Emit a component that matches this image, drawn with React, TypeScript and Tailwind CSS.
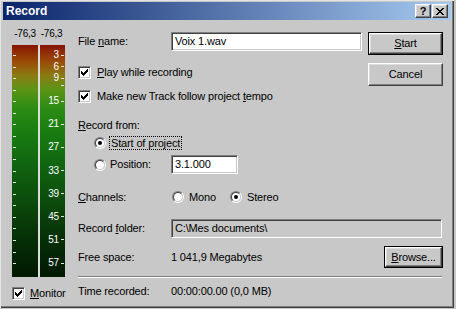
import React from 'react';

const sunken =
  'border border-t-[#808080] border-l-[#808080] border-b-white border-r-white shadow-[inset_1px_1px_0_#404040,inset_-1px_-1px_0_#c8c8c8]';
const raised =
  'border border-t-white border-l-white border-b-[#404040] border-r-[#404040] shadow-[inset_-1px_-1px_0_#808080,inset_1px_1px_0_#dcdcdc]';

const LEVELS = Array.from({ length: 19 }, (_, i) => (i + 1) * 3);
const LABELED = [3, 6, 9, 15, 21, 27, 33, 39, 45, 51, 57];

function Check({ checked = true }: { checked?: boolean }) {
  return (
    <span className={`flex h-[13px] w-[13px] shrink-0 items-center justify-center bg-white ${sunken}`}>
      {checked && (
        <svg width="7" height="7" viewBox="0 0 7 7" shapeRendering="crispEdges">
          <rect x="6" y="0" width="1" height="1" />
          <rect x="5" y="1" width="2" height="1" />
          <rect x="0" y="2" width="1" height="1" />
          <rect x="4" y="2" width="3" height="1" />
          <rect x="0" y="3" width="2" height="1" />
          <rect x="3" y="3" width="3" height="1" />
          <rect x="0" y="4" width="5" height="1" />
          <rect x="1" y="5" width="3" height="1" />
          <rect x="2" y="6" width="1" height="1" />
        </svg>
      )}
    </span>
  );
}

function Radio({ on = false }: { on?: boolean }) {
  return (
    <span className="flex h-[12px] w-[12px] shrink-0 rounded-full border border-t-[#808080] border-l-[#808080] border-b-white border-r-white">
      <span className="flex flex-1 items-center justify-center rounded-full border border-t-[#404040] border-l-[#404040] border-b-[#c8c8c8] border-r-[#c8c8c8] bg-white">
        {on && <span className="h-[4px] w-[4px] rounded-full bg-black" />}
      </span>
    </span>
  );
}

function Bar({ right = false }: { right?: boolean }) {
  return (
    <div className="relative h-full flex-1 bg-[linear-gradient(to_bottom,#861400_0%,#9a4a06_7%,#8c7a12_13%,#5e9416_19%,#2c8c14_27%,#187c10_38%,#106410_52%,#0b4a0b_68%,#062f06_84%,#021802_100%)]">
      {LEVELS.map((v, i) => {
        const top = 10 + i * 11.56;
        if (!right) {
          return <span key={v} className="absolute left-[1px] h-px w-[3px] bg-[#e4e4e4]" style={{ top }} />;
        }
        if (v > 12 && !LABELED.includes(v)) return null;
        return (
          <div
            key={v}
            className="absolute right-[1px] flex items-center gap-[2px] text-[10px] leading-[10px] text-white"
            style={{ top: top - 5 }}
          >
            {LABELED.includes(v) && <span>{v}</span>}
            <span className="h-px w-[3px] bg-[#e4e4e4]" />
          </div>
        );
      })}
    </div>
  );
}

function Btn({ children, primary = false, className = '' }: { children: React.ReactNode; primary?: boolean; className?: string }) {
  if (primary) {
    return (
      <div className={`flex border border-black ${className}`}>
        <div className={`flex flex-1 items-center justify-center bg-[#c8c8c8] ${raised}`}>{children}</div>
      </div>
    );
  }
  return <div className={`flex items-center justify-center bg-[#c8c8c8] ${raised} ${className}`}>{children}</div>;
}

export default function App() {
  return (
    <div className="h-[309px] w-[456px] bg-[#c8c8c8] font-['Liberation_Sans',Arial,sans-serif] text-[11px] tracking-[-0.15px] text-black">
      <div className="flex h-[308px] w-[454px] flex-col px-[3px] pt-[2px] shadow-[inset_1px_1px_0_#e4e4e4,inset_-1px_-1px_0_#404040,inset_-2px_-2px_0_#808080]">
        {/* title bar */}
        <div className="flex h-[18px] items-center justify-between bg-[linear-gradient(to_right,#0a246a,#a6caf0)] pl-[3px] pr-[3px]">
          <span className="text-[12px] font-bold tracking-normal text-white">Record</span>
          <div className="flex gap-[1px]">
            <div className={`flex h-[14px] w-[16px] items-center justify-center bg-[#c8c8c8] text-[11px] leading-none font-bold ${raised}`}>?</div>
            <div className={`flex h-[14px] w-[16px] items-center justify-center bg-[#c8c8c8] ${raised}`}>
              <svg width="8" height="7" viewBox="0 0 8 7" shapeRendering="crispEdges">
                <path d="M0 0h2v1h-2zM6 0h2v1h-2zM1 1h2v1h-2zM5 1h2v1h-2zM2 2h4v1h-4zM3 3h2v1h-2zM2 4h4v1h-4zM1 5h2v1h-2zM5 5h2v1h-2zM0 6h2v1h-2zM6 6h2v1h-2z" />
              </svg>
            </div>
          </div>
        </div>

        <div className="flex flex-1">
          {/* meters */}
          <div className="ml-[9px] flex w-[53px] flex-col pt-[8px]">
            <div className="flex h-[12px] text-[10px] leading-[12px] tracking-[-0.3px]">
              <span className="w-[26px] text-center">-76,3</span>
              <span className="flex-1 text-center">-76,3</span>
            </div>
            <div className="mt-[5px] flex h-[232px] gap-[2px] bg-[#dcdcdc]">
              <Bar />
              <Bar right />
            </div>
            <div className="mt-[8px] flex items-center gap-[5px] whitespace-nowrap">
              <Check />
              <span>
                <u>M</u>onitor
              </span>
            </div>
          </div>

          {/* form */}
          <div className="ml-[13px] flex w-[365px] flex-col pt-[12px]">
            <div className="flex gap-[6px]">
              <div className="flex w-[284px] flex-col">
                <div className="flex h-[19px] items-center">
                  <span className="w-[93px]">
                    File <u>n</u>ame:
                  </span>
                  <div className={`flex h-[19px] flex-1 items-center bg-white pl-[3px] ${sunken}`}>Voix 1.wav</div>
                </div>
                <div className="mt-[15px] flex h-[13px] items-center gap-[6px]">
                  <Check />
                  <span>
                    <u>P</u>lay while recording
                  </span>
                </div>
                <div className="mt-[11px] flex h-[13px] items-center gap-[6px]">
                  <Check />
                  <span>
                    Make new Track follow project <u>t</u>empo
                  </span>
                </div>
              </div>
              <div className="flex flex-col">
                <Btn primary className="h-[23px] w-[75px]">
                  <span>
                    <u>S</u>tart
                  </span>
                </Btn>
                <Btn className="mt-[8px] h-[23px] w-[75px]">Cancel</Btn>
              </div>
            </div>

            <div className="mt-[15px] h-[14px] leading-[14px]">
              <u>R</u>ecord from:
            </div>
            <div className="mt-[4px] flex h-[14px] items-center pl-[16px]">
              <Radio on />
              <span className="ml-[3px] border border-dotted border-black px-[1px] leading-[12px]">Start of project</span>
            </div>
            <div className="mt-[5px] flex h-[19px] items-center">
              <div className="flex w-[93px] items-center gap-[4px] pl-[16px]">
                <Radio />
                <span>Position:</span>
              </div>
              <div className={`flex h-[19px] w-[67px] items-center bg-white pl-[3px] ${sunken}`}>3.1.000</div>
            </div>

            <div className="mt-[15px] flex h-[16px] items-center">
              <span className="w-[94px]">
                <u>C</u>hannels:
              </span>
              <div className="flex w-[58px] items-center gap-[5px]">
                <Radio />
                <span>Mono</span>
              </div>
              <div className="flex items-center gap-[5px]">
                <Radio on />
                <span>Stereo</span>
              </div>
            </div>

            <div className="mt-[14px] flex h-[19px] items-center">
              <span className="w-[93px]">
                Record <u>f</u>older:
              </span>
              <div className={`mr-[1px] flex h-[19px] flex-1 items-center bg-[#c8c8c8] pl-[3px] ${sunken}`}>C:\Mes documents\</div>
            </div>

            <div className="mt-[8px] flex h-[22px] items-center">
              <span className="w-[93px]">Free space:</span>
              <span className="flex-1">1 041,9 Megabytes</span>
              <Btn primary className="h-[22px] w-[59px]">
                <span>
                  <u>B</u>rowse...
                </span>
              </Btn>
            </div>

            <div className="mt-[8px] mr-[1px] h-[2px] border-t border-b border-t-[#808080] border-b-white" />

            <div className="mt-[6px] flex h-[14px] items-center">
              <span className="w-[93px]">Time recorded:</span>
              <span>00:00:00.00 (0,0 MB)</span>
            </div>
          </div>
        </div>
      </div>
    </div>
  );
}
